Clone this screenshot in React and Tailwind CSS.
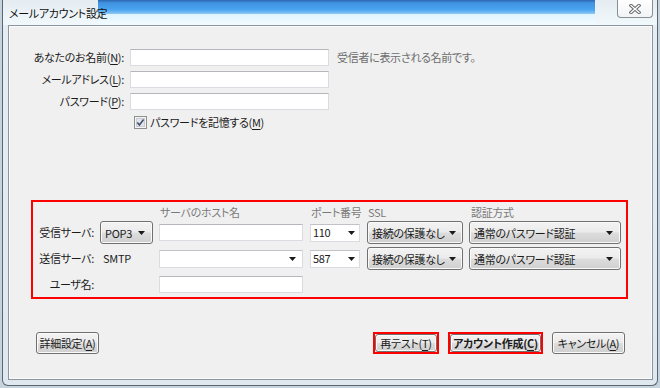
import React from "react";

const FONT = "font-['Noto_Sans_CJK_JP',sans-serif] [font-feature-settings:'palt'] text-[11px] leading-none tracking-[-0.3px] whitespace-nowrap text-[#1b1b1b]";
const BTN = "flex items-center h-full rounded-[3px] border border-[#707070] bg-[linear-gradient(#f3f3f3_0%,#ebebeb_48%,#dddddd_52%,#cfcfcf_100%)] shadow-[inset_0_0_0_1px_#fafafa]";

function Arrow({ className = "" }) {
  return (
    <svg width="7" height="4" viewBox="0 0 7 4" className={`shrink-0 ${className}`}>
      <path d="M0 0h7L3.5 4z" fill="#1a1a1a" />
    </svg>
  );
}

function Mn({ children }) {
  return <span className="underline underline-offset-[2px] decoration-1">{children}</span>;
}

function TextBox({ className = "" }) {
  return <div className={`h-[17px] bg-white border border-[#dadce2] border-t-[#b5b7bd] ${className}`} />;
}

function Combo({ value, className = "" }) {
  return (
    <div className={`h-[18px] bg-white border border-[#dadce2] border-t-[#c0c2c7] flex items-center pl-[2px] pr-[4px] ${className}`}>
      <span className="flex-1">{value}</span>
      <Arrow />
    </div>
  );
}

function DropBtn({ label, className = "" }) {
  return (
    <div className={`${BTN} h-[23px] pl-[4px] pr-[7px] ${className}`}>
      <span className="flex-1 pt-[1px]">{label}</span>
      <Arrow className="ml-[4px]" />
    </div>
  );
}

function PushBtn({ children, className = "" }) {
  return (
    <div className={`${BTN} justify-center h-[22px] ${className}`}>
      <span className="pt-[1px]">{children}</span>
    </div>
  );
}

function CheckBox() {
  return (
    <svg width="13" height="13" viewBox="0 0 13 13">
      <rect x="0.5" y="0.5" width="12" height="12" fill="#f4f4f4" stroke="#8e8f8f" />
      <rect x="2.5" y="2.5" width="8" height="8" fill="#e2e4e8" stroke="#c9ccd2" />
      <path d="M3.3 6.4 L5.4 8.9 L9.6 3.4" fill="none" stroke="#3f4f6e" strokeWidth="1.6" />
    </svg>
  );
}

export default function App() {
  return (
    <div className={`w-[660px] h-[388px] overflow-hidden bg-[#c4d3de] ${FONT}`}>
      <div className="mx-[2px] h-[386px] flex flex-col border-x border-b border-[#5b6670] rounded-b-[6px] bg-[linear-gradient(#e6eef4,#dfe8ef)]">
        {/* Title bar */}
        <div className="relative h-[25px] shrink-0 flex items-start bg-[linear-gradient(#e4ecf1,#f2f9fd)]">
          <div className="absolute left-[95px] right-[62px] top-0 h-[14px] bg-[linear-gradient(#2b66b0_0%,#3f92df_20%,#4aa4ef_70%,#8fcaf5_100%)] blur-[0.6px]" />
          <div className="absolute left-[95px] right-[62px] top-[14px] h-[11px] bg-[linear-gradient(#dff4ff,#f4fcff)]" />
          <span className="relative mt-[8px] ml-[6px] text-[#111]">メールアカウント設定</span>
          <div className="relative ml-auto mr-[4px] w-[36px] h-[18px] rounded-b-[4px] border border-t-0 border-[#8a8f94] bg-[linear-gradient(#ffffff,#f1f3f5)] flex items-center justify-center">
            <svg width="12" height="10" viewBox="0 0 12 10">
              <path d="M2 1.5 L10 8.5 M10 1.5 L2 8.5" stroke="#6b6b6b" strokeWidth="3.4" strokeLinecap="square" />
              <path d="M2 1.5 L10 8.5 M10 1.5 L2 8.5" stroke="#ffffff" strokeWidth="1.3" strokeLinecap="square" />
            </svg>
          </div>
        </div>

        {/* Content panel */}
        <div className="ml-[5px] mr-[4px] h-[355px] border border-[#8e959c] bg-[#f0f0f0] shadow-[inset_0_0_0_1px_#fbfbfb] flex flex-col">
          {/* Account form */}
          <div className="pt-[23px] flex flex-col gap-[5px]">
            <div className="flex items-center">
              <div className="w-[115px] text-right">あなたのお名前(<Mn>N</Mn>):</div>
              <TextBox className="ml-[6px] w-[199px]" />
              <span className="ml-[8px] text-[#6d6d6d]">受信者に表示される名前です。</span>
            </div>
            <div className="flex items-center">
              <div className="w-[115px] text-right">メールアドレス(<Mn>L</Mn>):</div>
              <TextBox className="ml-[6px] w-[199px]" />
            </div>
            <div className="flex items-center">
              <div className="w-[115px] text-right">パスワード(<Mn>P</Mn>):</div>
              <TextBox className="ml-[6px] w-[199px] border-[#a9bdd3] border-t-[#8fa6c2]" />
            </div>
            <div className="flex items-center mt-[1px] ml-[125px]">
              <CheckBox />
              <span className="ml-[3px]">パスワードを記憶する(<Mn>M</Mn>)</span>
            </div>
          </div>

          {/* Server settings (highlighted) */}
          <div className="mt-[71px] ml-[22px] w-[597px] h-[99px] border-2 border-[#ff0000] pb-[1px] grid grid-cols-[61px_53px_145px_51px_96px_152px] grid-rows-[16px_23px_23px_23px] gap-x-[6px] gap-y-[3px] items-center">
            <div />
            <div />
            <div className="self-end pl-[1px] text-[#7a7a7a]">サーバのホスト名</div>
            <div className="self-end pl-[1px] text-[#7a7a7a]">ポート番号</div>
            <div className="self-end pl-[1px] text-[#7a7a7a]">SSL</div>
            <div className="self-end pl-[2px] text-[#7a7a7a]">認証方式</div>

            <div className="text-right">受信サーバ:</div>
            <DropBtn label="POP3" />
            <TextBox className="w-[144px]" />
            <Combo value="110" className="w-[50px]" />
            <DropBtn label="接続の保護なし" />
            <DropBtn label="通常のパスワード認証" />

            <div className="text-right">送信サーバ:</div>
            <div className="pl-[3px]">SMTP</div>
            <Combo value="" className="w-[144px] pr-[6px]" />
            <Combo value="587" className="w-[50px]" />
            <DropBtn label="接続の保護なし" />
            <DropBtn label="通常のパスワード認証" />

            <div className="text-right">ユーザ名:</div>
            <div />
            <TextBox className="w-[144px]" />
            <div />
            <div />
            <div />
          </div>

          {/* Footer buttons */}
          <div className="mt-[33px] flex items-center h-[22px]">
            <PushBtn className="ml-[27px] w-[63px]">詳細設定(<Mn>A</Mn>)</PushBtn>
            <div className="ml-auto mr-[27px] flex items-center gap-[9px] h-full">
              <div className="h-full w-[66px] border-2 border-[#ff0000]">
                <PushBtn className="h-full">再テスト(<Mn>T</Mn>)</PushBtn>
              </div>
              <div className="h-full w-[95px] border-2 border-[#ff0000]">
                <PushBtn className="h-full font-bold">アカウント作成(<Mn>C</Mn>)</PushBtn>
              </div>
              <PushBtn className="w-[73px]">キャンセル(<Mn>A</Mn>)</PushBtn>
            </div>
          </div>
        </div>
      </div>
    </div>
  );
}
